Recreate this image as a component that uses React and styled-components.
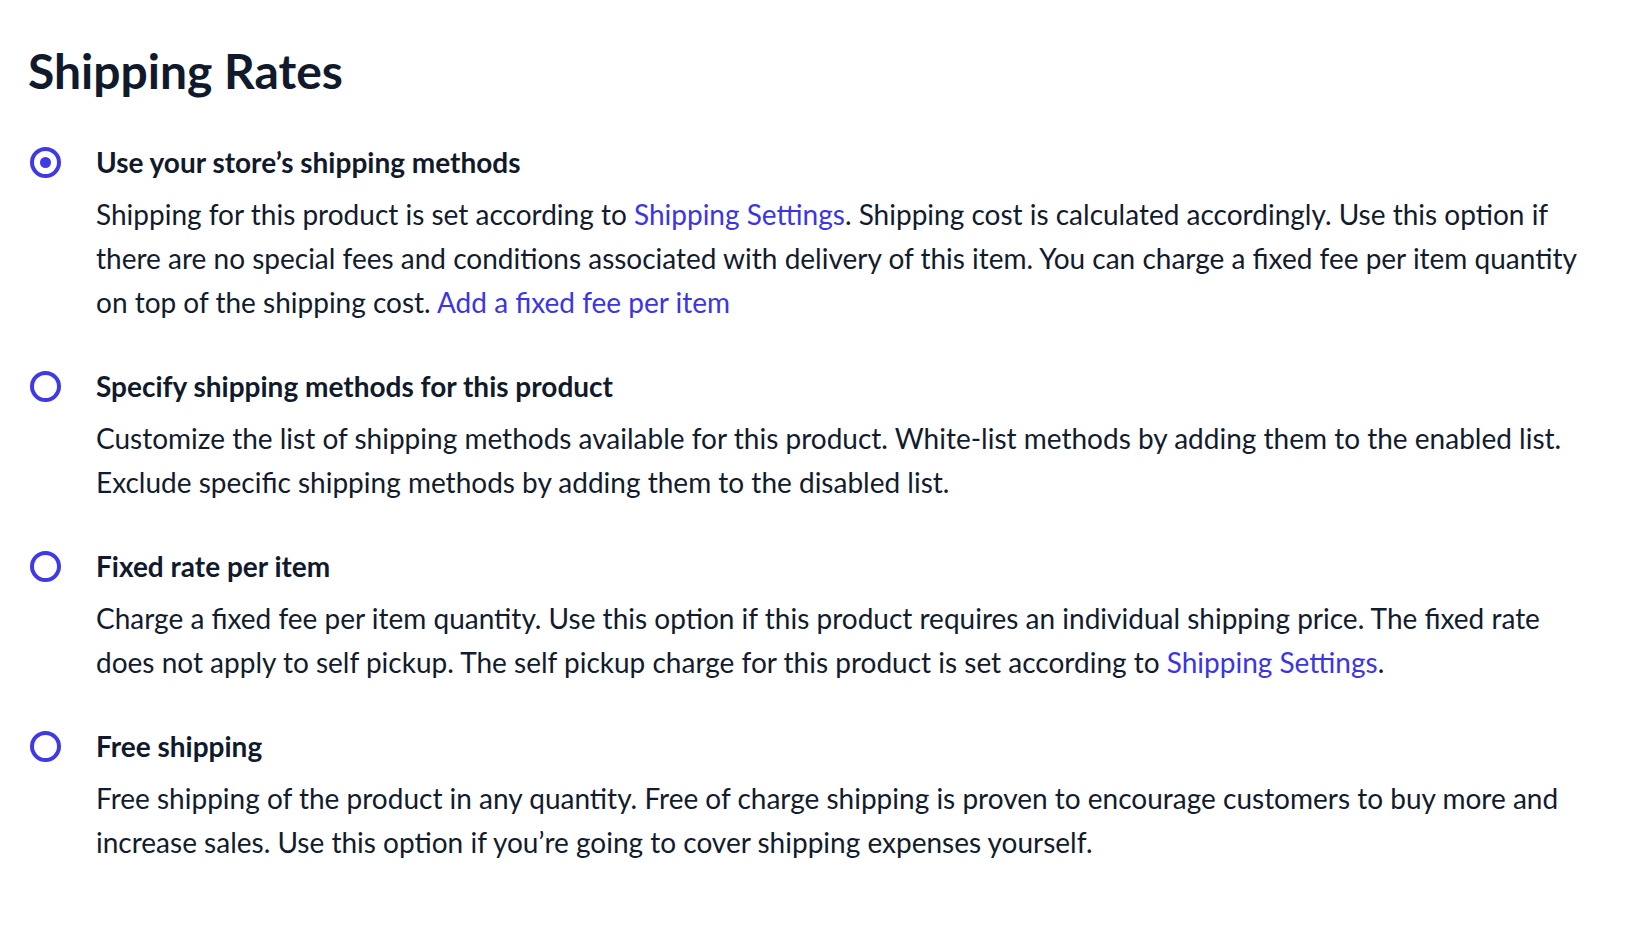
import React, { useState } from "react";
import styled, { createGlobalStyle } from "styled-components";

const GlobalStyle = createGlobalStyle`
  html, body {
    margin: 0;
    padding: 0;
    background: #ffffff;
  }
  body {
    font-family: Lato, "Open Sans", "Liberation Sans", sans-serif;
    color: #131b2e;
    -webkit-font-smoothing: antialiased;
  }
`;

const Page = styled.div`
  padding: 42px 60px 40px 28px;
  display: flex;
  flex-direction: column;
  gap: 46px;
`;

const Title = styled.h1`
  margin: 0;
  font-size: 48px;
  line-height: 58px;
  font-weight: 700;
  color: #111a2c;
`;

const OptionList = styled.div`
  display: flex;
  flex-direction: column;
  gap: 46px;
`;

const Option = styled.label`
  display: grid;
  grid-template-columns: 31px 1fr;
  column-gap: 35px;
  align-items: start;
  padding-left: 2px;
  cursor: pointer;
`;

const Radio = styled.span`
  box-sizing: border-box;
  width: 31px;
  height: 31px;
  margin-top: 0.5px;
  border-radius: 50%;
  border: 4px solid #3f39e6;
  display: flex;
  align-items: center;
  justify-content: center;

  &::after {
    content: "";
    width: 11px;
    height: 11px;
    border-radius: 50%;
    background: #3f39e6;
    display: ${(p) => (p.checked ? "block" : "none")};
  }
`;

const Content = styled.div`
  display: flex;
  flex-direction: column;
  gap: 14px;
`;

const OptionTitle = styled.div`
  font-size: 28px;
  line-height: 32px;
  font-weight: 700;
  color: #111a2c;
`;

const Description = styled.p`
  margin: 0;
  font-size: 28px;
  line-height: 44px;
  font-weight: 400;
  color: #131b2e;
`;

const Link = styled.a`
  color: #3b35e4;
  text-decoration: none;
`;

const options = [
  {
    id: "store",
    title: "Use your store’s shipping methods",
    body: (
      <>
        Shipping for this product is set according to{" "}
        <Link href="#">Shipping Settings</Link>. Shipping cost is calculated
        accordingly. Use this option if there are no special fees and
        conditions associated with delivery of this item. You can charge a
        fixed fee per item quantity on top of the shipping cost.{" "}
        <Link href="#">Add a fixed fee per item</Link>
      </>
    ),
  },
  {
    id: "specify",
    title: "Specify shipping methods for this product",
    body: (
      <>
        Customize the list of shipping methods available for this product.
        White-list methods by adding them to the enabled list. Exclude specific
        shipping methods by adding them to the disabled list.
      </>
    ),
  },
  {
    id: "fixed",
    title: "Fixed rate per item",
    body: (
      <>
        Charge a fixed fee per item quantity. Use this option if this product
        requires an individual shipping price. The fixed rate does not apply to
        self pickup. The self pickup charge for this product is set according
        to <Link href="#">Shipping Settings</Link>.
      </>
    ),
  },
  {
    id: "free",
    title: "Free shipping",
    body: (
      <>
        Free shipping of the product in any quantity. Free of charge shipping is
        proven to encourage customers to buy more and increase sales. Use this
        option if you’re going to cover shipping expenses yourself.
      </>
    ),
  },
];

export default function App() {
  const [selected, setSelected] = useState("store");

  return (
    <>
      <GlobalStyle />
      <Page>
        <Title>Shipping Rates</Title>
        <OptionList>
          {options.map((o) => (
            <Option key={o.id} onClick={() => setSelected(o.id)}>
              <Radio checked={selected === o.id} />
              <Content>
                <OptionTitle>{o.title}</OptionTitle>
                <Description>{o.body}</Description>
              </Content>
            </Option>
          ))}
        </OptionList>
      </Page>
    </>
  );
}
